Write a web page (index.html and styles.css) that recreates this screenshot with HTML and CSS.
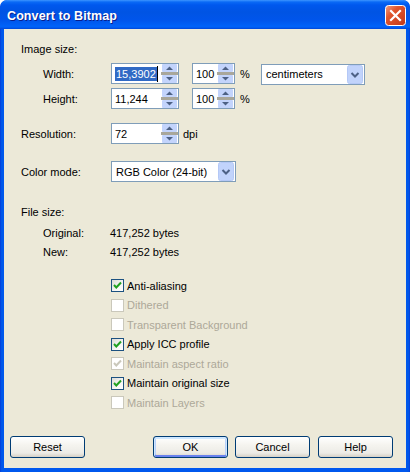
FILE: index.html
```html
<!DOCTYPE html>
<html>
<head>
<meta charset="utf-8">
<link rel="stylesheet" href="styles.css">
</head>
<body>
<div class="window">
  <div class="titlebar">
    <span class="title">Convert to Bitmap</span>
    <span class="close">
      <svg width="21" height="21" viewBox="0 0 21 21">
        <defs>
          <linearGradient id="cg" x1="0" y1="0" x2="1" y2="1">
            <stop offset="0" stop-color="#F0A085"/>
            <stop offset="0.35" stop-color="#E0552D"/>
            <stop offset="1" stop-color="#C0381A"/>
          </linearGradient>
        </defs>
        <rect x="0.5" y="0.5" width="20" height="20" rx="3" fill="url(#cg)" stroke="#FFFFFF"/>
        <path d="M6 6 L15 15 M15 6 L6 15" stroke="#FFFFFF" stroke-width="2.2" stroke-linecap="square"/>
      </svg>
    </span>
  </div>
  <div class="client">
    <div class="main">
      <div class="sec-title">Image size:</div>
      <div class="size-grid">
        <div class="row">
          <span class="lbl indent">Width:</span>
          <div class="spin w68">
            <span class="val"><span class="sel">15,3902</span><span class="caret"></span></span>
            <svg class="spinbtn" width="17" height="19" viewBox="0 0 17 19"><rect x="1" y="0" width="15" height="8" rx="1" fill="#C3D4FC"/><rect x="0" y="8" width="17" height="3" fill="#A9A79B"/><rect x="1" y="11" width="15" height="8" rx="1" fill="#C3D4FC"/><path d="M5 6 L8.5 2.5 L12 6 Z" fill="#4D6185"/><path d="M5 13 L8.5 16.5 L12 13 Z" fill="#4D6185"/></svg>
          </div>
          <div class="spin pct">
            <span class="val">100</span>
            <svg class="spinbtn" width="17" height="19" viewBox="0 0 17 19"><rect x="1" y="0" width="15" height="8" rx="1" fill="#C3D4FC"/><rect x="0" y="8" width="17" height="3" fill="#A9A79B"/><rect x="1" y="11" width="15" height="8" rx="1" fill="#C3D4FC"/><path d="M5 6 L8.5 2.5 L12 6 Z" fill="#4D6185"/><path d="M5 13 L8.5 16.5 L12 13 Z" fill="#4D6185"/></svg>
          </div>
          <span class="unit">%</span>
          <div class="combo units">
            <span class="val">centimeters</span>
            <svg class="ddbtn" width="16" height="19" viewBox="0 0 16 19"><rect x="0.5" y="0.5" width="15" height="18" rx="2" fill="#C1D3FB" stroke="#B4C8F6"/><path d="M4.5 8 L8 11.5 L11.5 8" fill="none" stroke="#4D6185" stroke-width="2"/></svg>
          </div>
        </div>
        <div class="row">
          <span class="lbl indent">Height:</span>
          <div class="spin w68">
            <span class="val">11,244</span>
            <svg class="spinbtn" width="17" height="19" viewBox="0 0 17 19"><rect x="1" y="0" width="15" height="8" rx="1" fill="#C3D4FC"/><rect x="0" y="8" width="17" height="3" fill="#A9A79B"/><rect x="1" y="11" width="15" height="8" rx="1" fill="#C3D4FC"/><path d="M5 6 L8.5 2.5 L12 6 Z" fill="#4D6185"/><path d="M5 13 L8.5 16.5 L12 13 Z" fill="#4D6185"/></svg>
          </div>
          <div class="spin pct">
            <span class="val">100</span>
            <svg class="spinbtn" width="17" height="19" viewBox="0 0 17 19"><rect x="1" y="0" width="15" height="8" rx="1" fill="#C3D4FC"/><rect x="0" y="8" width="17" height="3" fill="#A9A79B"/><rect x="1" y="11" width="15" height="8" rx="1" fill="#C3D4FC"/><path d="M5 6 L8.5 2.5 L12 6 Z" fill="#4D6185"/><path d="M5 13 L8.5 16.5 L12 13 Z" fill="#4D6185"/></svg>
          </div>
          <span class="unit">%</span>
        </div>
      </div>

      <div class="row res-row">
        <span class="lbl">Resolution:</span>
        <div class="spin w68">
          <span class="val">72</span>
          <svg class="spinbtn" width="17" height="19" viewBox="0 0 17 19"><rect x="1" y="0" width="15" height="8" rx="1" fill="#C3D4FC"/><rect x="0" y="8" width="17" height="3" fill="#A9A79B"/><rect x="1" y="11" width="15" height="8" rx="1" fill="#C3D4FC"/><path d="M5 6 L8.5 2.5 L12 6 Z" fill="#4D6185"/><path d="M5 13 L8.5 16.5 L12 13 Z" fill="#4D6185"/></svg>
        </div>
        <span class="dpi">dpi</span>
      </div>

      <div class="row color-row">
        <span class="lbl">Color mode:</span>
        <div class="combo colormode">
          <span class="val">RGB Color (24-bit)</span>
          <svg class="ddbtn" width="16" height="19" viewBox="0 0 16 19"><rect x="0.5" y="0.5" width="15" height="18" rx="2" fill="#C1D3FB" stroke="#B4C8F6"/><path d="M4.5 8 L8 11.5 L11.5 8" fill="none" stroke="#4D6185" stroke-width="2"/></svg>
        </div>
      </div>

      <div class="sec-title fs-title">File size:</div>
      <div class="frows">
        <div class="frow"><span class="flbl">Original:</span><span>417,252 bytes</span></div>
        <div class="frow"><span class="flbl">New:</span><span>417,252 bytes</span></div>
      </div>

      <div class="checks">
        <div class="chk"><span class="box on"><svg width="11" height="11" viewBox="0 0 11 11"><path d="M2 5 L4.3 7.5 L9 2.5" fill="none" stroke="#21A121" stroke-width="2"/></svg></span><span>Anti-aliasing</span></div>
        <div class="chk dis"><span class="box"></span><span>Dithered</span></div>
        <div class="chk dis"><span class="box"></span><span>Transparent Background</span></div>
        <div class="chk"><span class="box on"><svg width="11" height="11" viewBox="0 0 11 11"><path d="M2 5 L4.3 7.5 L9 2.5" fill="none" stroke="#21A121" stroke-width="2"/></svg></span><span>Apply ICC profile</span></div>
        <div class="chk dis"><span class="box"><svg width="11" height="11" viewBox="0 0 11 11"><path d="M2 5 L4.3 7.5 L9 2.5" fill="none" stroke="#CAC8BB" stroke-width="2"/></svg></span><span>Maintain aspect ratio</span></div>
        <div class="chk"><span class="box on"><svg width="11" height="11" viewBox="0 0 11 11"><path d="M2 5 L4.3 7.5 L9 2.5" fill="none" stroke="#21A121" stroke-width="2"/></svg></span><span>Maintain original size</span></div>
        <div class="chk dis"><span class="box"></span><span>Maintain Layers</span></div>
      </div>
    </div>

    <div class="buttons">
      <span class="btn">Reset</span>
      <span class="btn default push">OK</span>
      <span class="btn gap7">Cancel</span>
      <span class="btn gap8">Help</span>
    </div>
  </div>
</div>
</body>
</html>
```

FILE: styles.css
```css
html, body {
  margin: 0;
  padding: 0;
  background: #ffffff;
}
body {
  font-family: "Liberation Sans", Arial, sans-serif;
  font-size: 11px;
  color: #000000;
}
.window {
  width: 410px;
  height: 472px;
  box-sizing: border-box;
  display: flex;
  flex-direction: column;
  background: linear-gradient(to right, #0831D9 0, #0055E5 1px, #0058EE 3px, #0058EE 406px, #0055E5 409px, #0831D9 410px);
  border-radius: 7px 7px 0 0;
  overflow: hidden;
}
.titlebar {
  height: 29px;
  flex: none;
  display: flex;
  align-items: flex-start;
  padding: 0 4px 0 7px;
  background: linear-gradient(to bottom, #3D95FF 0px, #0A6AF6 2px, #0058EE 5px, #0054E3 12px, #0055EB 20px, #0062F8 26px, #0062F8 27px, #0046D8 29px);
  border-radius: 7px 7px 0 0;
}
.title {
  color: #ffffff;
  font-family: "Liberation Sans", Arial, sans-serif;
  font-weight: bold;
  font-size: 12.5px;
  line-height: 14px;
  margin-top: 9px;
  text-shadow: 1px 1px 0 #0A1E8C;
  letter-spacing: 0.1px;
}
.close {
  margin-left: auto;
  margin-top: 5px;
  width: 21px;
  height: 21px;
  display: block;
}
.close svg { display: block; }

.client {
  flex: 1;
  margin: 0 4px 4px 4px;
  background: #ECE9D8;
  display: flex;
  flex-direction: column;
}
.main {
  padding-left: 17px;
}
.sec-title {
  margin-top: 14px;
  height: 13px;
  line-height: 13px;
}
.size-grid {
  margin-top: 7px;
  display: flex;
  flex-direction: column;
  gap: 4px;
}
.row {
  display: flex;
  align-items: center;
  height: 21px;
}
.lbl {
  width: 90px;
  box-sizing: border-box;
  flex: none;
}
.lbl.indent {
  padding-left: 22px;
}
.spin, .combo {
  height: 21px;
  box-sizing: border-box;
  border: 1px solid #7F9DB9;
  background: #ffffff;
  display: flex;
  align-items: center;
  flex: none;
}
.spin .val, .combo .val {
  flex: 1;
  padding-left: 3px;
  display: flex;
  align-items: center;
  white-space: nowrap;
}
.w68 { width: 68px; }
.pct { width: 43px; margin-left: 13px; }
.spinbtn, .ddbtn { display: block; flex: none; }
.ddbtn { margin-right: 1px; }
.sel {
  background: #316AC5;
  color: #ffffff;
  line-height: 14px;
  padding: 0 1px;
}
.caret {
  display: inline-block;
  width: 1px;
  height: 16px;
  background: #000000;
}
.unit {
  margin-left: 5px;
  width: 16px;
}
.units {
  width: 104px;
  margin-left: 5px;
  margin-top: 1px;
}
.units .val, .colormode .val { padding-left: 4px; }
.res-row { margin-top: 14px; }
.dpi { margin-left: 4px; }
.color-row { margin-top: 17px; }
.colormode { width: 125px; }
.fs-title { margin-top: 24px; }
.frows { margin-top: 5px; }
.frow {
  height: 19px;
  line-height: 19px;
  display: flex;
}
.flbl {
  width: 89px;
  padding-left: 22px;
  box-sizing: border-box;
}
.checks { margin-top: 14px; }
.chk {
  height: 19.5px;
  display: flex;
  align-items: center;
  padding-left: 90px;
}
.box {
  width: 13px;
  height: 13px;
  box-sizing: border-box;
  border: 1px solid #1C5180;
  background: linear-gradient(135deg, #DCDCD7 0%, #F6F6F4 60%, #ffffff 100%);
  margin-right: 3px;
  display: flex;
  align-items: center;
  justify-content: center;
  flex: none;
}
.box svg { display: block; }
.chk.dis { color: #ACA899; }
.chk.dis .box {
  border-color: #CAC8BB;
  background: #ffffff;
}
.buttons {
  margin-top: auto;
  display: flex;
  padding: 0 13px 10px 6px;
}
.btn {
  width: 75px;
  height: 22px;
  box-sizing: border-box;
  border: 1px solid #003C74;
  border-radius: 3px;
  background: linear-gradient(to bottom, #FFFFFF 0%, #F5F4EF 40%, #ECEBE6 80%, #D6D0C5 100%);
  display: flex;
  align-items: center;
  justify-content: center;
  flex: none;
}
.btn.default {
  box-shadow: inset 0 1px 0 1px #CEE7FF, inset 0 -1px 0 1px #6982EE, inset 1px 0 0 1px #B9D1FA, inset -1px 0 0 1px #B9D1FA;
}
.push { margin-left: auto; }
.gap7 { margin-left: 7px; }
.gap8 { margin-left: 8px; }
```
